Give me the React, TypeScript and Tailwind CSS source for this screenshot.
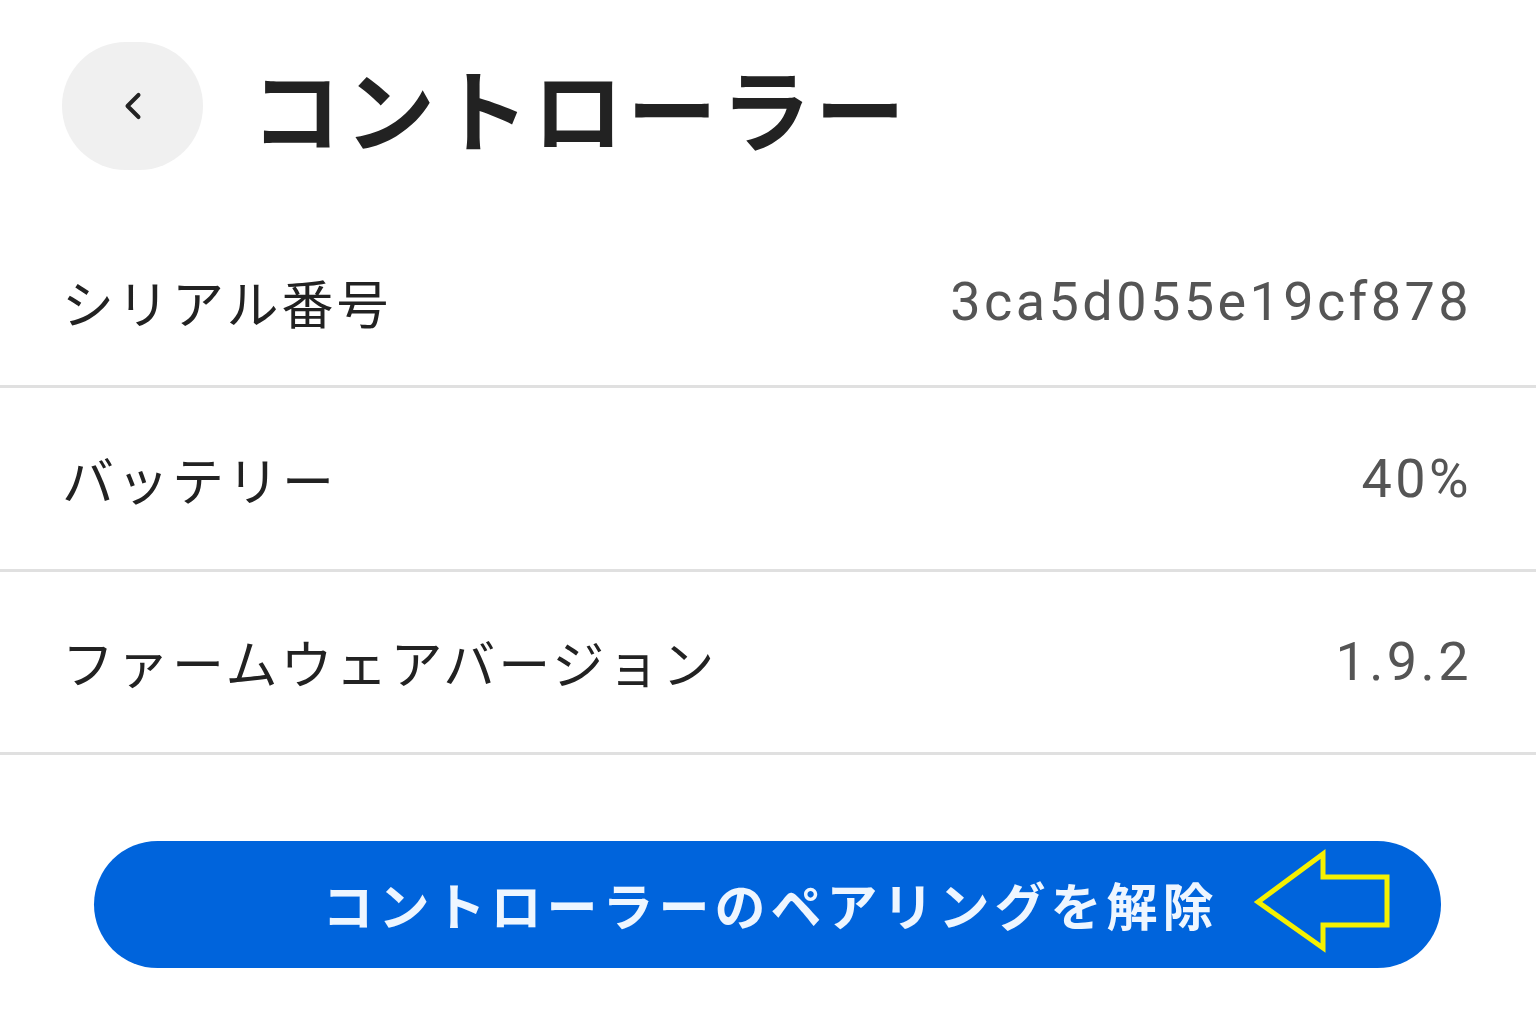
import { ChevronLeft } from "lucide-react";

const jp = "font-['Noto_Sans_CJK_JP',sans-serif]";

const rows = [
	{ label: "シリアル番号", value: "3ca5d055e19cf878", height: "h-[170px]" },
	{ label: "バッテリー", value: "40%", height: "h-[184px]" },
	{ label: "ファームウェアバージョン", value: "1.9.2", height: "h-[183px]" },
];

export default function App(): JSX.Element {
	return (
		<div className={`min-h-screen w-full bg-white ${jp}`}>
			<div className="flex items-center pt-[42px] pl-[62px]">
				<button className="flex h-[128px] w-[141px] items-center justify-center rounded-full bg-[#f0f0f0] text-[#222]">
					<ChevronLeft className="h-[44px] w-[44px]" strokeWidth={2.2} />
				</button>
				<h1 className="ml-[48px] text-[90px] font-bold leading-none tracking-[4px] text-[#222]">
					コントローラー
				</h1>
			</div>

			<div className="mt-[48px] flex flex-col">
				{rows.map((row) => (
					<div
						key={row.label}
						className={`flex ${row.height} items-center justify-between border-b-[3px] border-[#e0e0e0] pl-[62px] pr-[64px]`}
					>
						<span className="text-[52px] leading-none tracking-[3px] text-[#222]">
							{row.label}
						</span>
						<span className="font-['Roboto',sans-serif] text-[54px] leading-none tracking-[3.4px] text-[#555]">
							{row.value}
						</span>
					</div>
				))}
			</div>

			<div className="px-[94px] pt-[86px]">
				<button className="relative flex h-[127px] w-[1347px] items-center justify-center rounded-full bg-[#0064dc]">
					<span className="pl-[6px] text-[51px] font-bold leading-none tracking-[5px] text-[#eef6ff]">
						コントローラーのペアリングを解除
					</span>
					<svg
						className="absolute left-[1156px] top-[4px]"
						width="140"
						height="112"
						viewBox="0 0 140 112"
						fill="none"
					>
						<polygon
							points="8,57 73,9 73,32 137,32 137,80 73,80 73,103"
							stroke="#f5f000"
							strokeWidth="5"
							strokeLinejoin="miter"
						/>
					</svg>
				</button>
			</div>
		</div>
	);
}
